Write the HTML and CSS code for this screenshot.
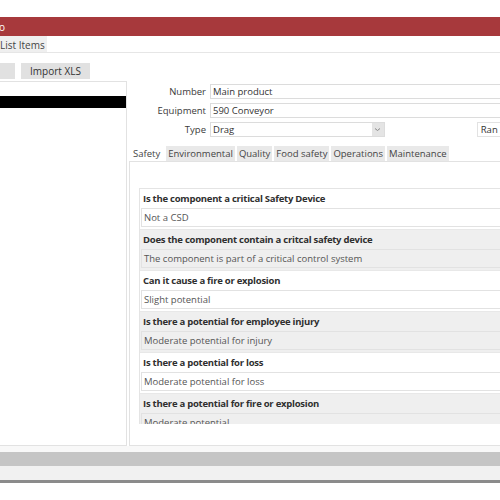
FILE: index.html
```html
<!DOCTYPE html>
<html lang="en">
<head>
    <meta charset="UTF-8">
    <title>Component Register</title>
    <link rel="stylesheet" href="styles.css">
</head>
<body>
<div class="screen">
    <div class="titlebar"><span class="title">o</span></div>

    <div class="menubar">
        <span class="menu-item">List Items</span>
    </div>

    <div class="toolbar">
        <button class="btn btn-cut"></button>
        <button class="btn">Import XLS</button>
    </div>

    <div class="workspace">
        <!-- item list -->
        <div class="listbox">
            <div class="list-row selected"></div>
        </div>

        <!-- details -->
        <div class="detail">
            <div class="form">
                <div class="field">
                    <label>Number</label>
                    <div class="input">Main product</div>
                </div>
                <div class="field">
                    <label>Equipment</label>
                    <div class="input">590 Conveyor</div>
                </div>
                <div class="field">
                    <label>Type</label>
                    <div class="select">Drag
                        <span class="caret">
                            <svg width="7" height="5" viewBox="0 0 7 5"><path d="M1 1.5 L3.5 3.5 L6 1.5" fill="none" stroke="#8a8a8a" stroke-width="1"/></svg>
                        </span>
                    </div>
                    <span class="extra">Ran</span>
                </div>
            </div>

            <div class="tabs">
                <span class="tab active">Safety</span>
                <span class="tab">Environmental</span>
                <span class="tab">Quality</span>
                <span class="tab">Food safety</span>
                <span class="tab">Operations</span>
                <span class="tab">Maintenance</span>
            </div>

            <div class="tab-panel">
                <div class="questions">
                    <div class="item">
                        <div class="q">Is the component a critical Safety Device</div>
                        <div class="a">Not a CSD</div>
                    </div>
                    <div class="item shade">
                        <div class="q">Does the component contain a critcal safety device</div>
                        <div class="a">The component is part of a critical control system</div>
                    </div>
                    <div class="item">
                        <div class="q">Can it cause a fire or explosion</div>
                        <div class="a">Slight potential</div>
                    </div>
                    <div class="item shade">
                        <div class="q">Is there a potential for employee injury</div>
                        <div class="a">Moderate potential for injury</div>
                    </div>
                    <div class="item">
                        <div class="q">Is there a potential for loss</div>
                        <div class="a">Moderate potential for loss</div>
                    </div>
                    <div class="item shade">
                        <div class="q">Is there a potential for fire or explosion</div>
                        <div class="a">Moderate potential</div>
                    </div>
                </div>
            </div>
        </div>
    </div>

    <div class="statusbar">
        <div class="status-gap"></div>
        <div class="status-dark"></div>
        <div class="status-light"></div>
        <div class="status-edge"></div>
    </div>
</div>
</body>
</html>
```

FILE: styles.css
```css
body {
    margin: 0;
    background: #ffffff;
    font-family: "Open Sans", "Noto Sans", sans-serif;
    font-size: 9.5px;
    color: #333;
    overflow: hidden;
}
.screen {
    width: 520px;
    padding-top: 17px;
}
.titlebar {
    height: 19px;
    background: #a7393c;
    display: flex;
    align-items: center;
}
.title {
    color: #fff;
    font-size: 10px;
    margin-left: -1px;
}
.menubar {
    height: 16px;
    border-bottom: 1px solid #e6e6e6;
    display: flex;
}
.menu-item {
    background: #efefef;
    padding: 2px 2px 0 0;
    height: 14px;
    color: #444;
    font-size: 10px;
}
.toolbar {
    display: flex;
    gap: 6px;
    padding-top: 10px;
    height: 16px;
    margin-bottom: 2px;
}
.btn {
    border: none;
    background: #e1e1e1;
    font-family: inherit;
    font-size: 10px;
    color: #333;
    height: 16px;
    padding: 0 9px;
}
.btn-cut {
    width: 15px;
    padding: 0;
}
.workspace {
    display: flex;
    height: 365px;
}
.listbox {
    flex-shrink: 0;
    width: 127px;
    border: 1px solid #e2e2e2;
    border-left: none;
    box-sizing: border-box;
    height: 365px;
}
.list-row {
    height: 12px;
    margin-top: 14px;
}
.list-row.selected {
    background: #000;
}
.detail {
    flex: 1;
    min-width: 0;
    margin-left: 2px;
    display: flex;
    flex-direction: column;
}
.form {
    display: flex;
    flex-direction: column;
    gap: 4px;
    padding-top: 3px;
}
.field {
    display: flex;
    align-items: center;
    height: 15px;
}
.field label {
    width: 77px;
    text-align: right;
    padding-right: 4px;
    color: #3a3a3a;
    flex-shrink: 0;
}
.input {
    flex: 1;
    height: 13px;
    line-height: 13px;
    border: 1px solid #dcdcdc;
    padding-left: 2px;
    color: #333;
}
.select {
    width: 174px;
    height: 13px;
    line-height: 13px;
    border: 1px solid #dcdcdc;
    padding-left: 2px;
    position: relative;
}
.caret {
    position: absolute;
    right: 0;
    top: 0;
    width: 12px;
    height: 13px;
    background: #e4e4e4;
    display: flex;
    align-items: center;
    justify-content: center;
}
.extra {
    margin-left: 92px;
    height: 13px;
    line-height: 13px;
    border: 1px solid #e2e2e2;
    border-right: none;
    padding-left: 3px;
    width: 40px;
}
.tabs {
    display: flex;
    gap: 2px;
    margin-top: 9px;
    margin-left: 2px;
    height: 15px;
}
.tab {
    background: #e9e9e9;
    padding: 0 2px;
    line-height: 15px;
    color: #444;
}
.tab.active {
    background: #fff;
    margin-right: 2px;
}
.tab-panel {
    flex: 1;
    border: 1px solid #e2e2e2;
    border-right: none;
    padding: 26px 0 0 9px;
}
.questions {
    height: 235px;
    overflow: hidden;
    border: 1px solid #e4e4e4;
    border-right: none;
    border-bottom: none;
}
.item {
    background: #fff;
    border-bottom: 1px solid #e8e8e8;
}
.item.shade {
    background: #efefef;
}
.q {
    height: 19px;
    line-height: 19px;
    padding-left: 3px;
    font-weight: 700;
    letter-spacing: -0.25px;
    color: #2f2f2f;
}
.a {
    height: 17px;
    line-height: 17px;
    margin: 0 0 2px 1px;
    padding-left: 2px;
    border: 1px solid #e2e2e2;
    border-right: none;
    color: #555;
}
.statusbar {
    display: flex;
    flex-direction: column;
}
.status-gap {
    height: 6px;
    background: #f8f8f8;
}
.status-dark {
    height: 14px;
    background: #c5c5c5;
}
.status-light {
    height: 14px;
    background: #f1f1f1;
}
.status-edge {
    height: 3px;
    background: #8b8b8b;
}
```
